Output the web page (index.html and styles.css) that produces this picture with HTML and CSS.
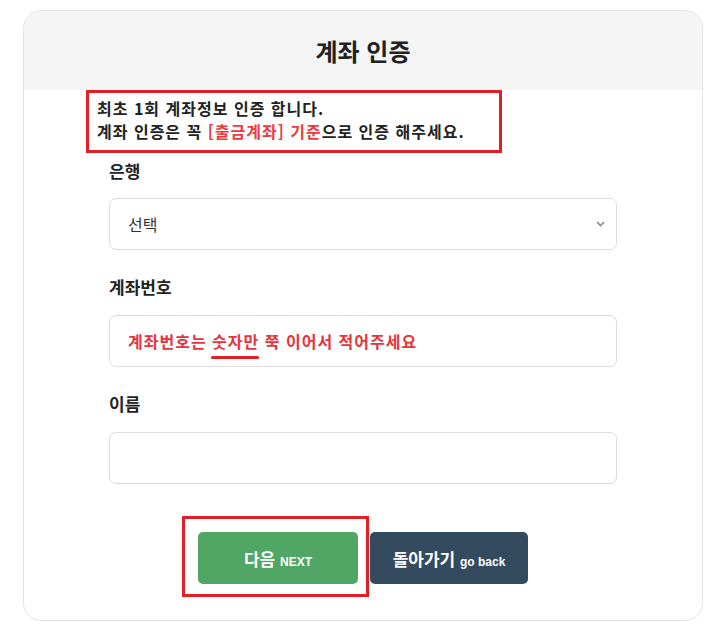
FILE: index.html
```html
<!DOCTYPE html>
<html lang="ko">
<head>
    <meta charset="UTF-8">
    <meta name="viewport" content="width=device-width, initial-scale=1.0">
    <title>계좌 인증</title>
    <link rel="stylesheet" href="styles.css">
</head>
<body>
    <div class="card">
        <div class="card-head">
            <h1>계좌 인증</h1>
        </div>

        <div class="notice">
            <p>최초 1회 계좌정보 인증 합니다.</p>
            <p>계좌 인증은 꼭 <span class="red">[출금계좌] 기준</span>으로 인증 해주세요.</p>
        </div>

        <div class="form">
            <label class="label">은행</label>
            <div class="field select">
                <span>선택</span>
                <svg class="chev" width="9" height="6" viewBox="0 0 9 6"><path d="M1 1l3.5 3.5L8 1" fill="none" stroke="#888" stroke-width="1.6"/></svg>
            </div>

            <label class="label">계좌번호</label>
            <div class="field">
                <span class="hint">계좌번호는 <span class="mark">숫자만</span> 쭉 이어서 적어주세요</span>
            </div>

            <label class="label">이름</label>
            <div class="field"></div>
        </div>

        <div class="buttons">
            <div class="highlight">
                <button class="btn btn-next">다음 <small>NEXT</small></button>
            </div>
            <button class="btn btn-back">돌아가기 <small>go back</small></button>
        </div>
    </div>
</body>
</html>
```

FILE: styles.css
```css
body {
    margin: 0;
    background: #fff;
    font-family: "Noto Sans CJK KR", "Liberation Sans", sans-serif;
    color: #222;
}
.card {
    margin: 10px 9px 0 23px;
    height: 611px;
    border: 1px solid #e4e4e4;
    border-radius: 18px;
    overflow: hidden;
    box-sizing: border-box;
}
.card-head {
    height: 79px;
    background: #f5f5f5;
    display: flex;
    align-items: center;
    justify-content: center;
}
h1 {
    margin: 0;
    font-size: 24px;
    font-weight: bold;
    color: #222;
}
.notice {
    margin: 0 0 0 62px;
    width: 416px;
    height: 63px;
    border: 3px solid #e01f26;
    box-sizing: border-box;
    padding: 4px 8px;
}
.notice p {
    margin: 0;
    font-size: 16px;
    font-weight: bold;
    line-height: 23px;
    letter-spacing: 1px;
    color: #222;
    white-space: nowrap;
}
.red {
    color: #ee3a3f;
}
.form {
    padding: 0 85px;
}
.label {
    display: block;
    font-size: 17px;
    font-weight: bold;
    line-height: 24px;
    margin-top: 25px;
    margin-bottom: 16px;
}
.form .label:first-child {
    margin-top: 6px;
    margin-bottom: 15px;
}
.field {
    height: 52px;
    border: 1px solid #dcdcdc;
    border-radius: 7px;
    box-sizing: border-box;
    display: flex;
    align-items: center;
    padding: 0 18px;
    font-size: 15px;
}
.select {
    justify-content: space-between;
    color: #333;
    padding-right: 11px;
    font-size: 16px;
}
.hint {
    color: #e8323c;
    font-weight: bold;
    font-size: 16px;
    letter-spacing: 1px;
}
.mark {
    position: relative;
}
.mark::after {
    content: "";
    position: absolute;
    left: -1px;
    right: 0;
    bottom: -6px;
    height: 3px;
    border-radius: 2px;
    background: #e01f26;
}
.buttons {
    display: flex;
    justify-content: center;
    gap: 12px;
    margin-top: 48px;
}
.highlight {
    position: relative;
}
.highlight::before {
    content: "";
    position: absolute;
    left: -16px;
    top: -16px;
    right: -11px;
    bottom: -13px;
    border: 3px solid #e01f26;
}
.btn {
    height: 52px;
    border: none;
    border-radius: 5px;
    color: #fff;
    font-family: "Noto Sans CJK KR", "Liberation Sans", sans-serif;
    font-size: 17px;
    font-weight: bold;
    cursor: pointer;
}
.btn small {
    font-family: "Liberation Sans", Arial, sans-serif;
    font-size: 12px;
    font-weight: bold;
}
.btn-next {
    width: 160px;
    background: #51a565;
}
.btn-back {
    width: 158px;
    background: #344a5f;
}
```
